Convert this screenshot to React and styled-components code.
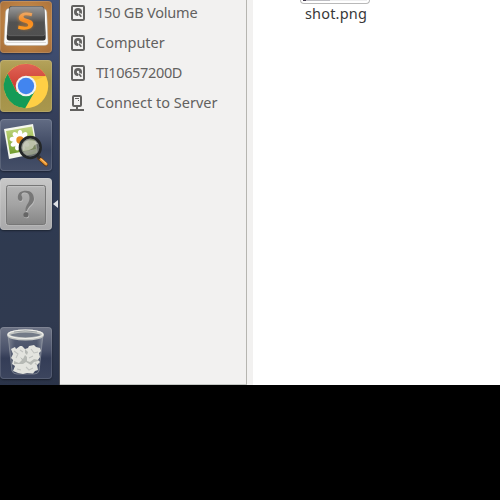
import React from "react";
import styled, { createGlobalStyle } from "styled-components";

const Global = createGlobalStyle`
  * { box-sizing: border-box; }
  body { margin: 0; background: #000; overflow: hidden; }
`;

const Screen = styled.div`
  width: 500px;
  height: 500px;
  background: #000;
  font-family: "Noto Sans", "Open Sans", sans-serif;
`;

const Desktop = styled.div`
  display: flex;
  height: 385px;
  overflow: hidden;
`;

const Launcher = styled.nav`
  width: 60px;
  height: 385px;
  padding: 1px 0 6px;
  display: flex;
  flex-direction: column;
  gap: 7px;
  flex: none;
  background: linear-gradient(180deg, #425379 0, #3e4c6e 55px, #353f5a 115px, #2e3a54 180px, #2f3a50 245px, #303a50 320px, #2a3348 385px);
  border-right: 1px solid #55565c;
`;

const tones = {
  orange: "radial-gradient(circle at 50% 45%, #d49a58 0, #b77c40 65%, #a66f3b 100%)",
  gold: "linear-gradient(180deg, #b5a35b 0, #a18f46 40%, #a9974d 100%)",
  slate: "linear-gradient(180deg, #626c84 0, #465069 42%, #39445e 60%, #465069 100%)",
  silver: "linear-gradient(180deg, #c8c8c8 0, #b6b6b6 55%, #a9a9ab 100%)",
  bin: "linear-gradient(180deg, #6d7385 0, #4a526a 45%, #343d57 60%, #3c455e 100%)",
};

const Tile = styled.div`
  width: 52px;
  height: 52px;
  flex: none;
  border-radius: 4px;
  background: ${(p) => tones[p.$tone]};
  box-shadow: inset 0 0 0 1px rgba(255, 255, 255, 0.13), 0 1px 2px rgba(0, 0, 0, 0.4);
  margin-top: ${(p) => (p.$last ? "auto" : 0)};
  svg { display: block; }
`;

const RunningTile = styled.div`
  display: flex;
  align-items: center;
  justify-content: space-between;
  width: 59px;
`;

const Arrow = styled.svg`
  display: block;
  flex: none;
`;

const Sidebar = styled.aside`
  width: 187px;
  height: 385px;
  background: #f2f1f0;
  border-right: 1px solid #b6b5b0;
  border-bottom: 1px solid #c5c8c4;
  flex: none;
  overflow: hidden;
`;

const Place = styled.div`
  height: 30px;
  display: flex;
  align-items: center;
  padding-left: 10px;
  gap: 10px;
  color: #62615f;
  &:first-child { margin-top: -2px; }
  svg { flex: none; display: block; }
`;

const Label = styled.span`
  font-size: 14.5px;
  line-height: 20px;
  white-space: nowrap;
  letter-spacing: ${(p) => p.$track}px;
  margin-top: ${(p) => p.$shift ?? -2}px;
`;

const Gutter = styled.div`
  width: 6px;
  flex: none;
  background: #f2f1f0;
`;

const Files = styled.main`
  flex: 1;
  background: #fff;
`;

const FileItem = styled.div`
  width: 72px;
  margin-left: 47px;
  display: flex;
  flex-direction: column;
  align-items: center;
  color: #383838;
`;

const Thumbnail = styled.div`
  width: 70px;
  height: 4px;
  padding: 0 2px;
  align-self: flex-start;
  border: 1px solid #b9b9b9;
  border-top: 0;
  border-radius: 0 0 4px 4px;
  background: #fff;
`;

const ThumbnailImage = styled.div`
  height: 1px;
  background: linear-gradient(90deg, #40374b 0 3px, #bebec3 3px 27px, #eeeeef 27px);
`;

const SublimeIcon = () => (
  <svg width="52" height="52" viewBox="0 1 52 52">
    <defs>
      <linearGradient id="key" x2="0" y2="1"><stop stopColor="#989898" /><stop offset=".35" stopColor="#6f6f6f" /><stop offset=".55" stopColor="#525252" /><stop offset="1" stopColor="#505050" /></linearGradient>
      <linearGradient id="bolt" x2="0" y2="1"><stop stopColor="#eda968" /><stop offset=".5" stopColor="#f88a20" /><stop offset="1" stopColor="#ff9b20" /></linearGradient>
      <filter id="glow" x="-50%" y="-50%" width="200%" height="200%"><feGaussianBlur stdDeviation="1.8" /></filter>
    </defs>
    <path d="M8 8.5Q5.8 9 5.5 12L4 42Q4 45.5 8 45.5H44Q48.5 45.5 48 42L46.8 12Q46.5 9 44 8.5Z" fill="#fafafa" stroke="#b0a697" strokeWidth=".5" />
    <path d="M6 42.5H46" stroke="#cfcfcf" strokeWidth=".8" />
    <path d="M9 9Q9 6 12 6H41Q44 6 44.3 9L45.7 37Q46 40.5 43 40.5H9.5Q6.5 40.5 6.7 37Z" fill="#333" />
    <path d="M9.3 9Q9.5 6.5 12 6.5H41Q43.7 6.5 43.9 9L45.2 33Q45.4 35.7 43 35.7H9.7Q7 35.7 7.3 33Z" fill="url(#key)" stroke="#7b7b7b" strokeWidth=".5" />
    <path d="M31 15C25 12 20 15 20 18C20 23 31 21 31 25C31 28 23 28 19 26" fill="none" stroke="#e98b25" strokeWidth="4" opacity=".55" filter="url(#glow)" />
    <path d="M32.3 13.2C25.4 11.2 19 13 18.8 18C18.6 23 28.2 21.8 28.2 25.2C28.2 27.3 23 27 18.6 25.6L18 28.8C25.6 31.1 33.2 29 33.2 23.8C33.2 18.4 23.5 19.5 23.5 16.8C23.5 14.8 27.8 15 31.5 16.2Z" fill="url(#bolt)" />
  </svg>
);

const ChromeIcon = () => (
  <svg width="52" height="52" viewBox="0 60 52 52">
    <defs>
      <linearGradient id="red" x2="0" y2="1"><stop stopColor="#df6456" /><stop offset="1" stopColor="#c9362c" /></linearGradient>
    </defs>
    <circle cx="26" cy="86" r="22.2" fill="#ffcf45" />
    <path d="M7.6 73.7A22.2 22.2 0 0 1 45.8 76H26L16.3 91.5Z" fill="url(#red)" />
    <path d="M7.6 73.7A22.2 22.2 0 0 0 25.2 108.2L34.8 91.2L26 96L16.3 91.5Z" fill="#159b57" />
    <path d="M27 76H45.8L36 80Z" fill="#d99722" opacity=".25" />
    <circle cx="26" cy="86" r="10.3" fill="#f1f2f3" />
    <circle cx="26" cy="86" r="8.2" fill="#4285ef" />
  </svg>
);

const ViewerIcon = () => (
  <svg width="52" height="52" viewBox="0 119 52 52">
    <defs><linearGradient id="leaf" x2="0" y2="1"><stop stopColor="#c3d783" /><stop offset=".4" stopColor="#a7c45f" /><stop offset="1" stopColor="#719c2e" /></linearGradient></defs>
    <path d="M4 129L33 124L38 153L9 159Z" fill="#f5f7ee" />
    <path d="M6 131L32 126.5L36 149L10 154Z" fill="url(#leaf)" />
    <g fill="#fff">
      {[0, 40, 80, 120, 160, 200, 240, 280, 320].map((a) => (
        <ellipse key={a} cx="20" cy="134.7" rx="2.5" ry="4.7" transform={`rotate(${a} 20 140.5)`} />
      ))}
    </g>
    <circle cx="20" cy="140" r="3.7" fill="#e58e22" />
    <path d="M39 158L46 164.5" stroke="#5b3b24" strokeWidth="4.2" strokeLinecap="round" />
    <path d="M41 159.5L46 164" stroke="#ed982c" strokeWidth="3" strokeLinecap="round" />
    <path d="M41 159L46 163.3" stroke="#ffc782" strokeWidth="1" strokeLinecap="round" />
    <path d="M37 155L40 158" stroke="#303234" strokeWidth="3" />
    <circle cx="30.3" cy="147.5" r="10.3" fill="#777c6c" fillOpacity=".72" stroke="#242728" strokeWidth="2.7" />
    <circle cx="30.3" cy="147.5" r="8.6" fill="none" stroke="#777b7b" strokeWidth=".5" />
    <path d="M22.5 148Q23 141 28 140.5Q35 139 38 144Q34 144 33 148Q29 151 23 151Z" fill="#d5d8c8" opacity=".7" />
    <path d="M27 154Q34 152 37 147Q37 154 31 155Z" fill="#929b83" opacity=".7" />
  </svg>
);

const UnknownIcon = () => (
  <svg width="52" height="52" viewBox="0 178 52 52">
    <defs><linearGradient id="plate" x2="0" y2="1"><stop stopColor="#b5b5b5" /><stop offset=".5" stopColor="#a3a3a3" /><stop offset="1" stopColor="#858585" /></linearGradient></defs>
    <rect x="5.5" y="184.5" width="41" height="41" rx="3" fill="#c1c1c1" />
    <rect x="6.5" y="185.5" width="39" height="39" rx="2" fill="url(#plate)" stroke="#777" />
    <path d="M8 186.7H44" stroke="#d0d0d0" strokeWidth=".7" />
    <g transform="translate(.5 .9)" fill="#bebebe">
      <path d="M18 199C17 193 21 190.8 26 190.8C31 190.8 34 194 34 199C34 204 28 206 27 211H25.5C25 205 29.5 203.5 29.5 198C29.5 194.5 28 192.4 25 192.4C22 192.4 20.5 194 22.3 197C23.5 201.5 19 202 18 199Z" />
      <circle cx="26" cy="214.8" r="2.5" />
    </g>
    <path d="M18 199C17 193 21 190.8 26 190.8C31 190.8 34 194 34 199C34 204 28 206 27 211H25.5C25 205 29.5 203.5 29.5 198C29.5 194.5 28 192.4 25 192.4C22 192.4 20.5 194 22.3 197C23.5 201.5 19 202 18 199Z" fill="#777" />
    <circle cx="26" cy="214.8" r="2.6" fill="#666" />
  </svg>
);

const TrashIcon = () => (
  <svg width="52" height="52" viewBox="0 327 52 52">
    <defs>
      <linearGradient id="glass"><stop stopColor="#a4a9b0" stopOpacity=".5" /><stop offset=".2" stopColor="#485269" stopOpacity=".4" /><stop offset=".82" stopColor="#485269" stopOpacity=".4" /><stop offset="1" stopColor="#aab0b8" stopOpacity=".55" /></linearGradient>
      <filter id="soft"><feGaussianBlur stdDeviation=".45" /></filter>
    </defs>
    <path d="M8 335L12 371Q13 374 17 374H34Q38 374 39 371L43 335Z" fill="url(#glass)" stroke="#9ba0a8" strokeWidth=".6" />
    <path d="M11 349L15 347L16 349L20 346L22 346L25 349L28 348L29 346L34 345L36 347L40 348L41 351L39 353L40 357L38 360L40 362L37 365L38 370L35 371L33 373.5L27 373L23 374L18 373L13 371L15 366L12 364L13 360L11 358L13 354Z" fill="#e3e4df" />
    <path d="M14 361L19 363L22 360L20 357L23 359L25 355L27 357L27 361L30 362L34 359L39 360L38 361L34 362L31 365L26 362L23 364L18 364L14 364ZM25 349L28 352L27 355L25 353Z" fill="#9fa39f" opacity=".65" filter="url(#soft)" />
    <path d="M14 351L18 354L16 358M20 350L23 352M31 349L34 353L38 352M29 358L33 356M17 369L21 370M26 367L29 370L33 368M35 363L37 365" fill="none" stroke="#c1c3c0" strokeWidth="1.1" filter="url(#soft)" />
    <ellipse cx="25.5" cy="335" rx="17" ry="4" fill="#737b88" stroke="#c5c8c5" strokeWidth="3" />
    <ellipse cx="25.5" cy="334.3" rx="17.4" ry="4.2" fill="none" stroke="#eeeeea" strokeWidth="1.2" />
    <path d="M14 332Q25 329.5 37 332" fill="none" stroke="#969c9f" strokeWidth=".8" />
  </svg>
);

const DriveIcon = () => (
  <svg width="16" height="16" viewBox="0 0 16 16">
    <rect x="2" y="1" width="12" height="14" rx="1" fill="none" stroke="#62615f" strokeWidth="2" />
    <circle cx="8" cy="7" r="4" fill="#62615f" />
    <path d="M8 7L12.8 9.5L8.3 12Z" fill="#f2f1f0" />
    <circle cx="8" cy="7" r="1.2" fill="#f2f1f0" />
    <path d="M8.8 8.8L11.3 11.8" stroke="#62615f" strokeWidth="1.7" />
  </svg>
);

const ServerIcon = () => (
  <svg width="16" height="16" viewBox="0 0 16 16" fill="none" stroke="#62615f">
    <rect x="3" y="1" width="8" height="10" rx="1" strokeWidth="2" />
    <path d="M5 3.5H9M8 5.5H9" strokeWidth="1" />
    <path d="M7 11V14M0 15H14" strokeWidth="2" />
  </svg>
);

const places = [
  { name: "150 GB Volume", track: -0.2, Icon: DriveIcon },
  { name: "Computer", track: 0, Icon: DriveIcon },
  { name: "TI10657200D", track: -0.35, Icon: DriveIcon },
  { name: "Connect to Server", track: 0, Icon: ServerIcon },
];

export default function App() {
  return (
    <Screen>
      <Global />
      <Desktop>
        <Launcher>
          <Tile $tone="orange"><SublimeIcon /></Tile>
          <Tile $tone="gold"><ChromeIcon /></Tile>
          <Tile $tone="slate"><ViewerIcon /></Tile>
          <RunningTile>
            <Tile $tone="silver"><UnknownIcon /></Tile>
            <Arrow width="6" height="8" viewBox="0 0 6 8"><path d="M0 4L5 0V8Z" fill="#e0e2e6" /></Arrow>
          </RunningTile>
          <Tile $tone="bin" $last><TrashIcon /></Tile>
        </Launcher>
        <Sidebar>
          {places.map(({ name, track, Icon }) => (
            <Place key={name}><Icon /><Label $track={track}>{name}</Label></Place>
          ))}
        </Sidebar>
        <Gutter />
        <Files>
          <FileItem>
            <Thumbnail><ThumbnailImage /></Thumbnail>
            <Label $track={0.18} $shift={-1}>shot.png</Label>
          </FileItem>
        </Files>
      </Desktop>
    </Screen>
  );
}
